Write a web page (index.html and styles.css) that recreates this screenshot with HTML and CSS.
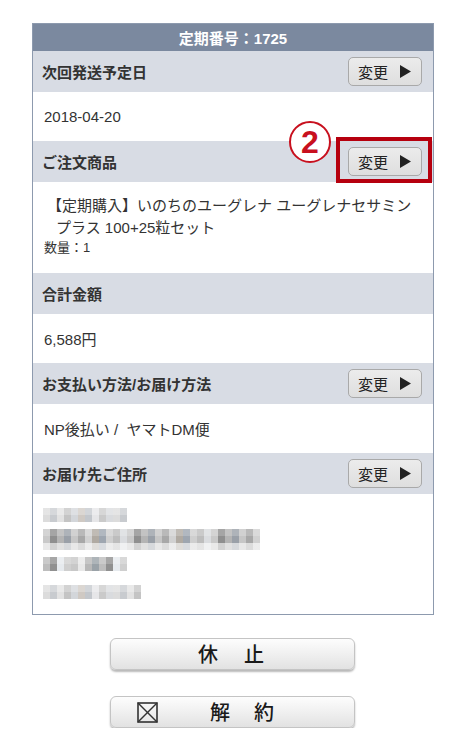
FILE: index.html
```html
<!DOCTYPE html>
<html lang="ja">
<head>
<meta charset="utf-8">
<title>定期購入</title>
<link rel="stylesheet" href="styles.css">
</head>
<body>
<div class="panel">
  <div class="panel-head">定期番号：1725</div>

  <div class="row-label">
    <span class="label">次回発送予定日</span>
    <button class="change-btn"><span>変更</span><svg class="tri" width="11" height="13" viewBox="0 0 11 13"><polygon points="0,0 11,6.5 0,13" fill="#222"/></svg></button>
  </div>
  <div class="row-value">2018-04-20</div>

  <div class="row-label">
    <span class="label">ご注文商品</span>
    <button class="change-btn"><span>変更</span><svg class="tri" width="11" height="13" viewBox="0 0 11 13"><polygon points="0,0 11,6.5 0,13" fill="#222"/></svg></button>
    <div class="highlight"></div>
    <div class="step-mark">2</div>
  </div>
  <div class="row-product">
    <p class="product-name">【定期購入】いのちのユーグレナ ユーグレナセサミンプラス 100+25粒セット</p>
    <p class="qty">数量：1</p>
  </div>

  <div class="row-label">
    <span class="label">合計金額</span>
  </div>
  <div class="row-value">6,588円</div>

  <div class="row-label">
    <span class="label">お支払い方法/お届け方法</span>
    <button class="change-btn"><span>変更</span><svg class="tri" width="11" height="13" viewBox="0 0 11 13"><polygon points="0,0 11,6.5 0,13" fill="#222"/></svg></button>
  </div>
  <div class="row-value">NP後払い /&nbsp; ヤマトDM便</div>

  <div class="row-label">
    <span class="label">お届け先ご住所</span>
    <button class="change-btn"><span>変更</span><svg class="tri" width="11" height="13" viewBox="0 0 11 13"><polygon points="0,0 11,6.5 0,13" fill="#222"/></svg></button>
  </div>
  <div class="row-address">
    <div class="blur blur-1"></div>
    <div class="blur blur-2"></div>
    <div class="blur blur-3"></div>
    <div class="blur blur-4"></div>
  </div>
</div>

<div class="actions">
  <button class="big-btn"><span class="big-text">休　止</span></button>
  <button class="big-btn big-btn-cancel">
    <svg class="box-x" width="21" height="21" viewBox="0 0 21 21"><rect x="1" y="1" width="19" height="19" fill="none" stroke="#333" stroke-width="1.6"/><line x1="1" y1="1" x2="20" y2="20" stroke="#333" stroke-width="1.4"/><line x1="20" y1="1" x2="1" y2="20" stroke="#333" stroke-width="1.4"/></svg>
    <span class="big-text cancel-text">解　約</span>
  </button>
</div>
</body>
</html>
```

FILE: styles.css
```css
* { box-sizing: border-box; }

html, body {
  margin: 0;
  padding: 0;
  background: #fff;
}

body {
  font-family: "Liberation Sans", "Noto Sans CJK JP", sans-serif;
  color: #333;
  width: 468px;
}

.panel {
  margin: 23px 0 0 32px;
  width: 402px;
  border: 1px solid #8d9aae;
  display: flex;
  flex-direction: column;
}

.panel-head {
  height: 27px;
  background: #7b899f;
  color: #fff;
  font-weight: bold;
  font-size: 15px;
  display: flex;
  align-items: center;
  justify-content: center;
}

.row-label {
  position: relative;
  height: 41px;
  background: #d8dce4;
  display: flex;
  align-items: center;
  justify-content: space-between;
  padding: 0 11px 0 9px;
}

.label {
  font-size: 15px;
  font-weight: bold;
  color: #333;
}

.change-btn {
  width: 74px;
  height: 29px;
  margin-top: -1px;
  border: 1px solid #a9a9a9;
  border-radius: 5px;
  background: linear-gradient(#ececec, #dedede);
  display: flex;
  align-items: center;
  justify-content: flex-start;
  padding: 0 0 0 9px;
  font-family: "Liberation Sans", "Noto Sans CJK JP", sans-serif;
  font-size: 15px;
  color: #222;
  gap: 12px;
}

.tri { display: block; }

.highlight {
  position: absolute;
  left: 303px;
  top: -4px;
  width: 96px;
  height: 46px;
  border: 4px solid #b6000e;
}

.step-mark {
  position: absolute;
  left: 256px;
  top: -20px;
  width: 42px;
  height: 42px;
  border: 2px solid #c8101e;
  border-radius: 50%;
  background: #fff;
  color: #c8101e;
  font-family: "Liberation Sans", sans-serif;
  font-weight: bold;
  font-size: 32px;
  line-height: 38px;
  text-align: center;
}

.row-value {
  height: 49px;
  display: flex;
  align-items: center;
  padding-left: 11px;
  font-size: 15px;
  color: #333;
}

.row-product {
  height: 91px;
  padding: 13px 16px 0 11px;
}

.product-name {
  margin: 0;
  padding-left: 12px;
  text-indent: -9px;
  font-size: 15px;
  line-height: 22px;
  color: #333;
}

.qty {
  margin: 0;
  font-size: 13px;
  line-height: 18px;
  color: #333;
}

.row-address {
  height: 120px;
  padding: 14px 0 0 10px;
  display: flex;
  flex-direction: column;
  align-items: flex-start;
}

.blur {
  height: 14px;
  background-image:
    linear-gradient(rgba(255,255,255,0.25) 50%, rgba(255,255,255,0) 50%),
    repeating-linear-gradient(90deg,
      #dcdcdc 0 7px, #c8cbcf 7px 14px, #e2e2e2 14px 21px, #c4c4c4 21px 28px,
      #d3d6da 28px 35px, #cfc9c3 35px 42px, #c3c7cc 42px 49px, #e6e6e8 49px 56px,
      #cacaca 56px 63px, #d9dbde 63px 70px);
}

.blur-1 { width: 84px; }

.blur-2 {
  width: 217px;
  height: 21px;
  margin-top: 7px;
  background-image:
    linear-gradient(rgba(255,255,255,0) 66%, rgba(255,255,255,0.6) 66%),
    linear-gradient(rgba(255,255,255,0.2) 33%, rgba(255,255,255,0) 33%),
    repeating-linear-gradient(90deg,
      #c9c9c9 0 7px, #8f8f8f 7px 14px, #b4b4b4 14px 21px, #9aa0a8 21px 28px,
      #c6c6c6 28px 35px, #a8a8a8 35px 42px, #d1d1d1 42px 49px, #b0aaa2 49px 56px,
      #9ea6b0 56px 63px, #cfcfcf 63px 70px, #bdbdbd 70px 77px, #dadcdf 77px 84px);
}

.blur-3 {
  width: 84px;
  margin-top: 7px;
  background-image:
    linear-gradient(rgba(255,255,255,0.2) 50%, rgba(255,255,255,0) 50%),
    repeating-linear-gradient(90deg,
      #bdbdbd 0 7px, #909090 7px 14px, #e6eaee 14px 21px, #cfcfcf 21px 28px,
      #c8c8c8 28px 35px, #e8e8e8 35px 42px, #b8b8b8 42px 49px, #9aa2a8 49px 56px);
}

.blur-4 {
  width: 98px;
  margin-top: 14px;
}

.actions {
  display: flex;
  flex-direction: column;
  align-items: flex-start;
  gap: 26px;
  margin: 23px 0 0 110px;
}

.big-btn {
  width: 245px;
  height: 32px;
  border: 1px solid #c4c4c4;
  border-radius: 6px;
  background: linear-gradient(#fdfdfd, #f0f0f0 50%, #e2e2e2);
  box-shadow: 0 2px 2px rgba(0,0,0,0.28);
  display: flex;
  align-items: center;
  justify-content: center;
  padding: 0;
  font-family: "Noto Sans CJK JP", sans-serif;
  color: #1a1a1a;
}

.big-text {
  font-size: 20px;
  font-weight: 500;
  letter-spacing: 3px;
  line-height: 1;
}

.big-btn-cancel {
  justify-content: flex-start;
  padding-left: 26px;
}

.box-x { display: block; }

.cancel-text {
  margin-left: 52px;
  letter-spacing: 2px;
}
```
